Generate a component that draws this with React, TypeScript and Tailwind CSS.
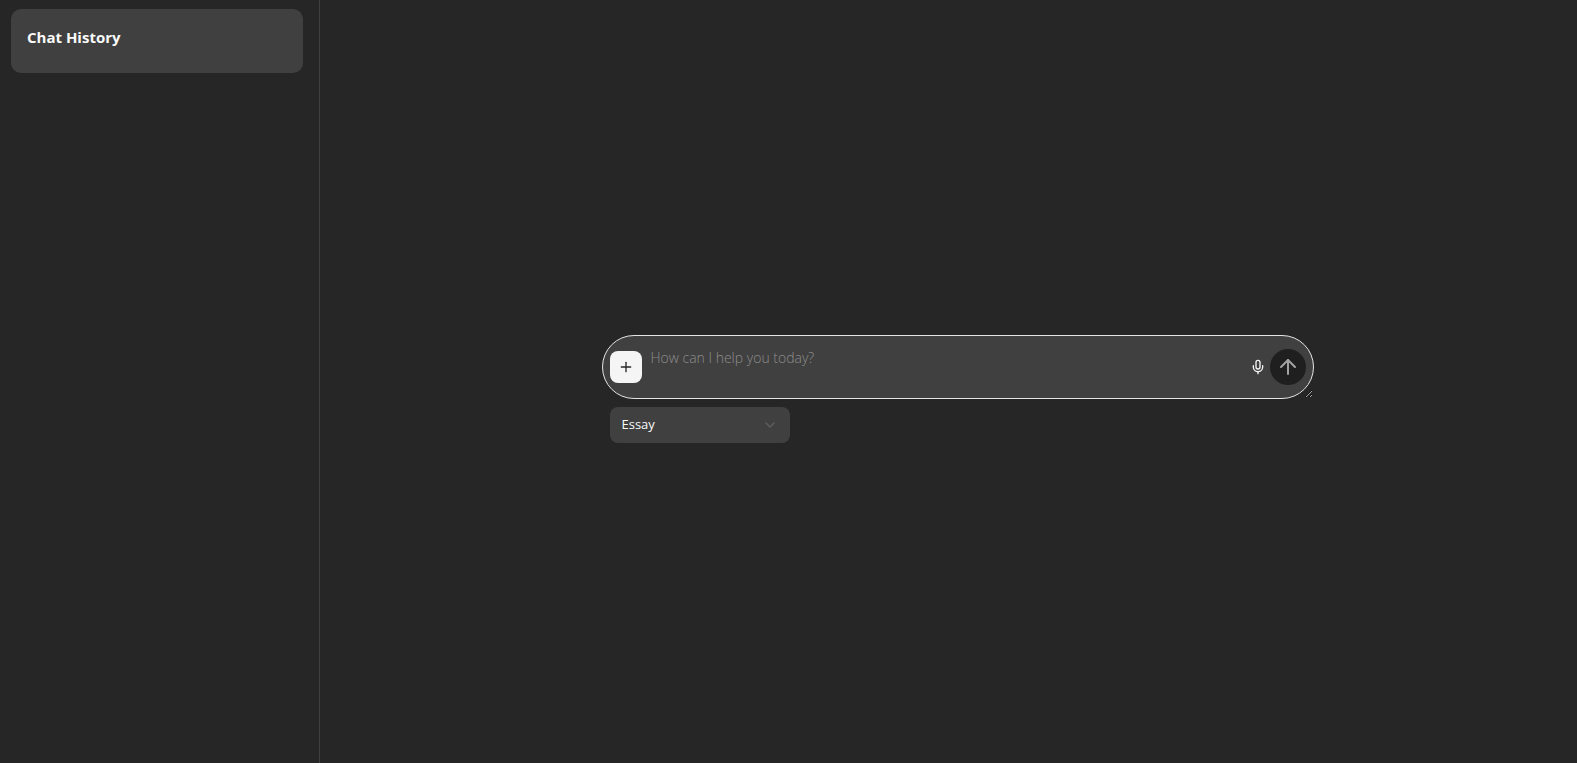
import React from "react";
import { ArrowUp, ChevronDown, Mic, Plus } from "lucide-react";

function Sidebar() {
  return (
    <aside className="w-80 shrink-0 border-r border-[#404040] pt-[9px] pr-4 pl-[11px]">
      <section className="h-16 rounded-[10px] bg-[#404040] p-4">
        <h2 className="text-[15px] leading-6 font-bold text-neutral-50">Chat History</h2>
      </section>
    </aside>
  );
}

function Composer() {
  return (
    <form className="w-full max-w-[712px]" onSubmit={(e) => e.preventDefault()}>
      <div className="relative">
        <textarea
          aria-label="Message"
          rows={2}
          placeholder="How can I help you today?"
          className="block h-16 w-full resize rounded-[32px] border border-[#e5e5e5] bg-[#404040] py-3 pr-20 pl-12 text-sm leading-5 font-light text-neutral-50 outline-none placeholder:text-[#8c8c8c]"
        />
        <button
          type="button"
          aria-label="Attach file"
          className="absolute top-4 left-2 flex size-8 items-center justify-center rounded-lg bg-[#f5f5f5] text-[#262626]"
        >
          <Plus size={16} />
        </button>
        <div className="absolute top-[14px] right-2 flex items-center gap-1">
          <button type="button" aria-label="Voice input" className="text-[#f5f5f5]">
            <Mic size={16} />
          </button>
          <button
            type="submit"
            aria-label="Send"
            className="flex size-9 items-center justify-center rounded-full bg-[#1f1f1f] text-[#a3a3a3]"
          >
            <ArrowUp size={24} />
          </button>
        </div>
      </div>
      <div className="relative mt-2 ml-2 w-[180px]">
        <select
          aria-label="Format"
          className="block h-9 w-full appearance-none rounded-lg bg-[#404040] px-3 text-[13px] text-neutral-50"
        >
          <option>Essay</option>
        </select>
        <ChevronDown
          size={16}
          className="pointer-events-none absolute top-[10px] right-3 text-[#5e5e5e]"
        />
      </div>
    </form>
  );
}

export default function App() {
  return (
    <div className="flex min-h-screen bg-[#262626] font-['Segoe_UI','Open_Sans',sans-serif]">
      <Sidebar />
      <main className="flex flex-1 items-center justify-center pt-[14px] pl-[18px]">
        <Composer />
      </main>
    </div>
  );
}
